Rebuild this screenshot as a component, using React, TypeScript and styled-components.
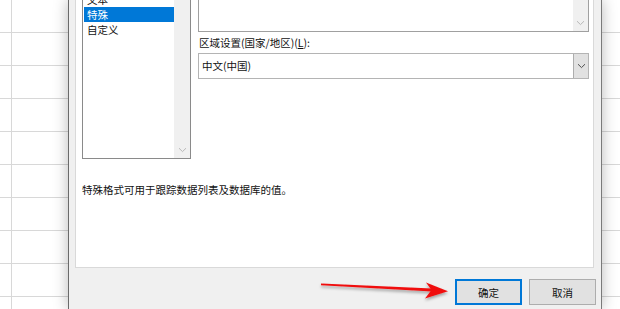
import styled, { createGlobalStyle } from "styled-components";

const GlobalStyle = createGlobalStyle`
  html, body {
    margin: 0;
    padding: 0;
    background: #ffffff;
  }
  body {
    font-family: "Noto Sans CJK SC", "Noto Sans", sans-serif;
    font-size: 10.5px;
    color: #111111;
  }
`;

const Screen = styled.div`
  position: relative;
  display: flex;
  width: 620px;
  height: 309px;
  overflow: hidden;
`;

const Sheet = styled.div<{ $cols: string; $width?: number }>`
  display: grid;
  grid-template-columns: ${(p) => p.$cols};
  grid-auto-rows: 33px;
  align-content: start;
  flex: ${(p) => (p.$width ? `0 0 ${p.$width}px` : "1")};
`;

const Cell = styled.div<{ $edge?: boolean }>`
  box-sizing: border-box;
  border-bottom: 1px solid #d8d8d8;
  border-right: ${(p) => (p.$edge ? "1px solid #d8d8d8" : "none")};
`;

const Dialog = styled.div`
  position: relative;
  z-index: 1;
  flex: 0 0 534px;
  box-sizing: border-box;
  display: flex;
  flex-direction: column;
  padding: 0 5px 0 6px;
  background: #f0f0f0;
  border-left: 1px solid #6a6a6a;
  border-right: 1px solid #7a7a7a;
  box-shadow: 0 0 14px rgba(0, 0, 0, 0.28);
`;

const Panel = styled.div`
  box-sizing: border-box;
  height: 268px;
  margin-right: 2px;
  padding: 0 3px 0 6px;
  background: #ffffff;
  border: 1px solid #d9d9d9;
  border-top: none;
  display: flex;
  flex-direction: column;
`;

const TopRow = styled.div`
  display: flex;
  gap: 7px;
`;

const ListBox = styled.div`
  box-sizing: border-box;
  width: 109px;
  height: 159px;
  padding-left: 1px;
  display: flex;
  border: 1px solid #8a8a8a;
  border-top: none;
`;

const ItemList = styled.div`
  flex: 1;
  margin-top: -8px;
  overflow: hidden;
`;

const Item = styled.div<{ $selected?: boolean }>`
  height: 15px;
  line-height: 15px;
  padding-left: 3px;
  white-space: nowrap;
  background: ${(p) => (p.$selected ? "#0078d7" : "transparent")};
  color: ${(p) => (p.$selected ? "#ffffff" : "#111111")};
`;

const ScrollTrack = styled.div<{ $width: number }>`
  width: ${(p) => p.$width}px;
  background: #f0f0f0;
  display: flex;
  flex-direction: column;
  justify-content: flex-end;
`;

const ArrowButton = styled.div`
  height: 17px;
  display: flex;
  align-items: center;
  justify-content: center;
`;

const RightCol = styled.div`
  width: 391px;
  display: flex;
  flex-direction: column;
`;

const SampleBox = styled.div`
  box-sizing: border-box;
  height: 32px;
  display: flex;
  justify-content: flex-end;
  border: 1px solid #a0a0a0;
  border-top: none;
`;

const Label = styled.div`
  margin-top: 4px;
  line-height: 14px;
  padding-left: 1px;
`;

const Combo = styled.div`
  box-sizing: border-box;
  height: 26px;
  margin-top: 3px;
  display: flex;
  align-items: stretch;
  background: #ffffff;
  border: 1px solid #b4b4b4;
`;

const ComboText = styled.div`
  flex: 1;
  padding-left: 3px;
  line-height: 24px;
`;

const DropButton = styled.div`
  width: 15px;
  box-sizing: border-box;
  display: flex;
  align-items: center;
  justify-content: center;
  background: #e1e1e1;
  border-left: 1px solid #adadad;
`;

const Description = styled.div`
  margin-top: 24px;
  line-height: 14px;
`;

const ButtonRow = styled.div`
  margin-top: 11px;
  display: flex;
  justify-content: flex-end;
  gap: 7px;
`;

const Button = styled.button<{ $default?: boolean }>`
  box-sizing: border-box;
  width: 67px;
  height: 26px;
  padding: 0;
  font-family: inherit;
  font-size: 10.5px;
  color: #111111;
  background: #e1e1e1;
  border: ${(p) => (p.$default ? "2px solid #0078d7" : "1px solid #adadad")};
`;

const Overlay = styled.svg`
  position: absolute;
  left: 0;
  top: 0;
  z-index: 2;
  pointer-events: none;
`;

const Chevron = ({ color }: { color: string }) => (
  <svg width="9" height="6" viewBox="0 0 9 6">
    <path d="M1 1.2 L4.5 4.6 L8 1.2" fill="none" stroke={color} strokeWidth="1" />
  </svg>
);

const rows = Array.from({ length: 10 }, (_, i) => i);

const App = () => {
  return (
    <>
      <GlobalStyle />
      <Screen>
        <Sheet $cols="12px 56px" $width={68}>
          {rows.map((r) => [<Cell key={`a${r}`} $edge />, <Cell key={`b${r}`} />])}
        </Sheet>
        <Dialog>
          <Panel>
            <TopRow>
              <ListBox>
                <ItemList>
                  <Item>文本</Item>
                  <Item $selected>特殊</Item>
                  <Item>自定义</Item>
                </ItemList>
                <ScrollTrack $width={16}>
                  <ArrowButton>
                    <Chevron color="#b8b8b8" />
                  </ArrowButton>
                </ScrollTrack>
              </ListBox>
              <RightCol>
                <SampleBox>
                  <ScrollTrack $width={15}>
                    <ArrowButton>
                      <Chevron color="#b8b8b8" />
                    </ArrowButton>
                  </ScrollTrack>
                </SampleBox>
                <Label>
                  区域设置(国家/地区)(<u>L</u>):
                </Label>
                <Combo>
                  <ComboText>中文(中国)</ComboText>
                  <DropButton>
                    <Chevron color="#505050" />
                  </DropButton>
                </Combo>
              </RightCol>
            </TopRow>
            <Description>特殊格式可用于跟踪数据列表及数据库的值。</Description>
          </Panel>
          <ButtonRow>
            <Button $default>确定</Button>
            <Button>取消</Button>
          </ButtonRow>
        </Dialog>
        <Sheet $cols="1fr">
          {rows.map((r) => (
            <Cell key={r} />
          ))}
        </Sheet>
        <Overlay width="620" height="309" viewBox="0 0 620 309">
          <defs>
            <filter id="arrowShadow" x="-10%" y="-50%" width="120%" height="200%">
              <feDropShadow dx="0" dy="2" stdDeviation="1.6" floodColor="#000" floodOpacity="0.35" />
            </filter>
          </defs>
          <g filter="url(#arrowShadow)" fill="#f01010">
            <polygon points="321,283.4 432,288.6 432,291.6 321,285.2" />
            <polygon points="448,291.2 426,282.6 431.5,290 425,298.6" />
          </g>
        </Overlay>
      </Screen>
    </>
  );
};

export default App;
